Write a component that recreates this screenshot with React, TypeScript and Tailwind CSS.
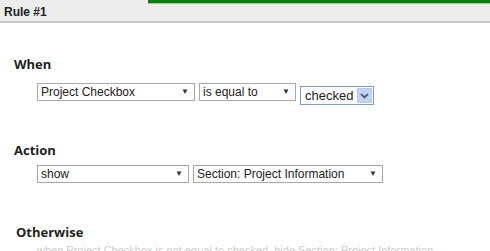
import React from 'react';

const Arrow = () => <span className="text-[8px] leading-none text-[#333]">▼</span>;

const Select: React.FC<{ label: string; width: string }> = ({ label, width }) => (
  <div
    className={`${width} h-[18px] flex items-center justify-between border border-[#a9a9a9] bg-white pl-[3px] pr-[5px] text-[12px] text-[#222]`}
  >
    <span>{label}</span>
    <Arrow />
  </div>
);

const App: React.FC = () => {
  return (
    <div className="w-[490px] h-[251px] overflow-hidden bg-white font-['Liberation_Sans',Arial,sans-serif]">
      <div className="h-[23px] bg-[#ececec] border-b-2 border-[#c6c6c6]">
        <div className="h-[4px] ml-[148px] bg-[#127a12] border-b border-[#8fd08f]" />
        <div className="pl-[4px] pt-[1px] text-[12px] font-bold text-[#222] leading-[14px]">Rule #1</div>
      </div>

      <div className="pl-[14px] pt-[33px]">
        <h3 className="font-['Open_Sans',sans-serif] text-[13px] font-bold text-[#222] leading-[16px]">When</h3>
        <div className="flex items-start gap-[4px] pl-[23px] pt-[11px]">
          <Select label="Project Checkbox" width="w-[158px]" />
          <Select label="is equal to" width="w-[97px]" />
          <div className="mt-[3px] w-[74px] h-[19px] flex items-center justify-between border border-[#7f9db9] bg-white pl-[4px] pr-[1px] text-[13px] text-[#222]">
            <span>checked</span>
            <span className="w-[15px] h-[15px] flex items-center justify-center bg-[#c3d3f5] border border-[#b8c9ef]">
              <svg width="9" height="6" viewBox="0 0 9 6">
                <path d="M1 1 L4.5 4.5 L8 1" fill="none" stroke="#4d6185" strokeWidth="1.8" />
              </svg>
            </span>
          </div>
        </div>

        <h3 className="mt-[37px] font-['Open_Sans',sans-serif] text-[13px] font-bold text-[#222] leading-[16px]">Action</h3>
        <div className="flex items-start gap-[4px] pl-[23px] pt-[7px]">
          <Select label="show" width="w-[152px]" />
          <Select label="Section: Project Information" width="w-[190px]" />
        </div>

        <h3 className="mt-[41px] pl-[2px] font-['Open_Sans',sans-serif] text-[13px] font-bold text-[#222] leading-[16px]">Otherwise</h3>
        <div className="pl-[23px] pt-[3px] text-[11px] text-[#ccc] leading-[14px] whitespace-nowrap">
          when Project Checkbox is not equal to checked, hide Section: Project Information
        </div>
      </div>
    </div>
  );
};

export default App;
